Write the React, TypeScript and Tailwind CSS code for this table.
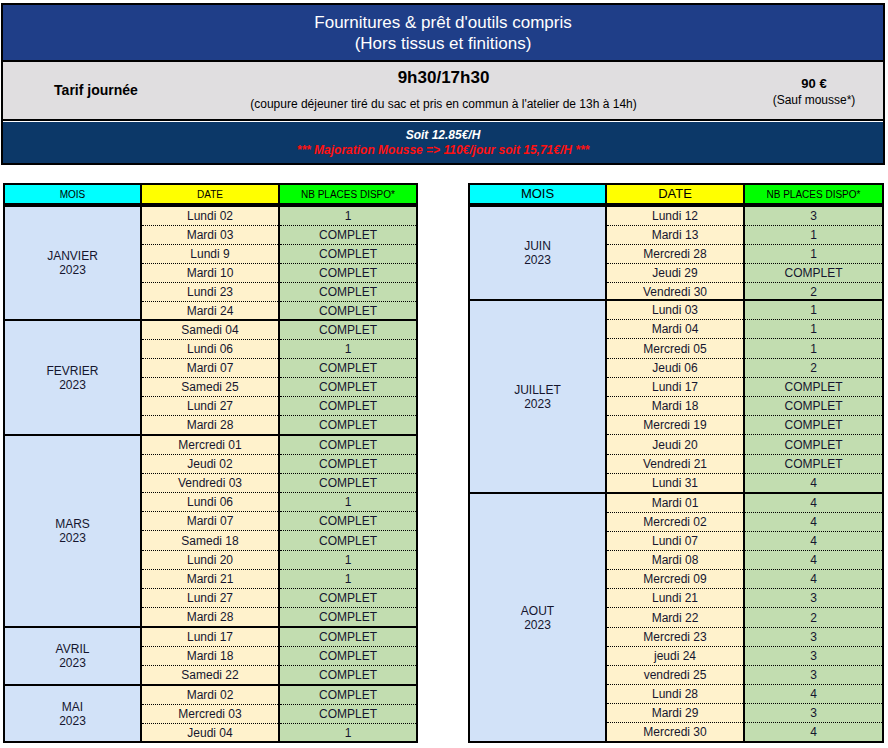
import React from "react";

type Slot = { day: string; places: string };

type MonthGroup = {
  name: string;
  height: string;
  slots: Slot[];
};

type TableData = {
  width: string;
  headSize: string;
  groups: MonthGroup[];
};

const slot = (day: string, places: string): Slot => ({ day, places });

const leftTable: TableData = {
  width: "w-[415px]",
  headSize: "text-[10px]",
  groups: [
    {
      name: "JANVIER",
      height: "h-[114px]",
      slots: [
        slot("Lundi 02", "1"),
        slot("Mardi 03", "COMPLET"),
        slot("Lundi 9", "COMPLET"),
        slot("Mardi 10", "COMPLET"),
        slot("Lundi 23", "COMPLET"),
        slot("Mardi 24", "COMPLET"),
      ],
    },
    {
      name: "FEVRIER",
      height: "h-[115px]",
      slots: [
        slot("Samedi 04", "COMPLET"),
        slot("Lundi 06", "1"),
        slot("Mardi 07", "COMPLET"),
        slot("Samedi 25", "COMPLET"),
        slot("Lundi 27", "COMPLET"),
        slot("Mardi 28", "COMPLET"),
      ],
    },
    {
      name: "MARS",
      height: "h-[192px]",
      slots: [
        slot("Mercredi 01", "COMPLET"),
        slot("Jeudi 02", "COMPLET"),
        slot("Vendredi 03", "COMPLET"),
        slot("Lundi 06", "1"),
        slot("Mardi 07", "COMPLET"),
        slot("Samedi 18", "COMPLET"),
        slot("Lundi 20", "1"),
        slot("Mardi 21", "1"),
        slot("Lundi 27", "COMPLET"),
        slot("Mardi 28", "COMPLET"),
      ],
    },
    {
      name: "AVRIL",
      height: "h-[58px]",
      slots: [
        slot("Lundi 17", "COMPLET"),
        slot("Mardi 18", "COMPLET"),
        slot("Samedi 22", "COMPLET"),
      ],
    },
    {
      name: "MAI",
      height: "h-[57px]",
      slots: [
        slot("Mardi 02", "COMPLET"),
        slot("Mercredi 03", "COMPLET"),
        slot("Jeudi 04", "1"),
      ],
    },
  ],
};

const rightTable: TableData = {
  width: "w-[416px]",
  headSize: "text-[13px]",
  groups: [
    {
      name: "JUIN",
      height: "h-[94px]",
      slots: [
        slot("Lundi 12", "3"),
        slot("Mardi 13", "1"),
        slot("Mercredi 28", "1"),
        slot("Jeudi 29", "COMPLET"),
        slot("Vendredi 30", "2"),
      ],
    },
    {
      name: "JUILLET",
      height: "h-[193px]",
      slots: [
        slot("Lundi 03", "1"),
        slot("Mardi 04", "1"),
        slot("Mercredi 05", "1"),
        slot("Jeudi 06", "2"),
        slot("Lundi 17", "COMPLET"),
        slot("Mardi 18", "COMPLET"),
        slot("Mercredi 19", "COMPLET"),
        slot("Jeudi 20", "COMPLET"),
        slot("Vendredi 21", "COMPLET"),
        slot("Lundi 31", "4"),
      ],
    },
    {
      name: "AOUT",
      height: "h-[249px]",
      slots: [
        slot("Mardi 01", "4"),
        slot("Mercredi 02", "4"),
        slot("Lundi 07", "4"),
        slot("Mardi 08", "4"),
        slot("Mercredi 09", "4"),
        slot("Lundi 21", "3"),
        slot("Mardi 22", "2"),
        slot("Mercredi 23", "3"),
        slot("jeudi 24", "3"),
        slot("vendredi 25", "3"),
        slot("Lundi 28", "4"),
        slot("Mardi 29", "3"),
        slot("Mercredi 30", "4"),
      ],
    },
  ],
};

const cellRow =
  "flex flex-1 items-center justify-center border-b border-dotted border-black last:border-b-0";

const PlanningTable = ({ data }: { data: TableData }) => {
  return (
    <div className={`${data.width} border-2 border-black`}>
      <div className="flex h-[20px] border-b-2 border-black text-black">
        <div
          className={`flex w-[137px] items-center justify-center border-r-2 border-black bg-[#00ffff] ${data.headSize}`}
        >
          MOIS
        </div>
        <div
          className={`flex w-[138px] items-center justify-center border-r-2 border-black bg-[#ffff00] ${data.headSize}`}
        >
          DATE
        </div>
        <div className="flex flex-1 items-center justify-center bg-[#00ff00] text-[10px]">
          NB PLACES DISPO*
        </div>
      </div>

      {data.groups.map((group) => (
        <div
          key={group.name}
          className={`flex border-t-2 border-black first-of-type:border-t-0 ${group.height}`}
        >
          <div className="flex w-[137px] items-center justify-center border-r-2 border-black bg-[#d2e2f8] text-center leading-[14px]">
            {group.name}
            <br />
            2023
          </div>
          <div className="flex w-[138px] flex-col border-r-2 border-black bg-[#fff2cc]">
            {group.slots.map((s, i) => (
              <div key={i} className={cellRow}>
                {s.day}
              </div>
            ))}
          </div>
          <div className="flex flex-1 flex-col bg-[#c2ddb0]">
            {group.slots.map((s, i) => (
              <div key={i} className={cellRow}>
                {s.places}
              </div>
            ))}
          </div>
        </div>
      ))}
    </div>
  );
};

export default function App() {
  return (
    <div className="min-h-screen bg-white font-['Liberation_Sans',Arial,sans-serif] text-[12px] text-[#15152e]">
      <div className="ml-[1px] mt-[3px] w-[884px] border-2 border-black">
        <div className="flex h-[57px] flex-col items-center justify-center border-b-2 border-black bg-[#1f3e88] text-[17px] leading-[21px] text-white">
          <div>Fournitures &amp; prêt d'outils compris</div>
          <div>(Hors tissus et finitions)</div>
        </div>

        <div className="flex h-[59px] border-b-2 border-black bg-[#e0dee0] text-black">
          <div className="flex w-[186px] items-center justify-center text-[14px] font-bold">
            Tarif journée
          </div>
          <div className="flex flex-1 flex-col items-center pr-[47px] pt-[6px]">
            <div className="text-[17px] font-bold leading-[20px]">
              9h30/17h30
            </div>
            <div className="mt-[9px] text-[12px] leading-[14px]">
              (coupure déjeuner tiré du sac et pris en commun à l'atelier de
              13h à 14h)
            </div>
          </div>
          <div className="flex w-[138px] flex-col items-center justify-center pt-[2px]">
            <div className="text-[13px] font-bold leading-[16px]">90 €</div>
            <div className="text-[12px] leading-[16px]">(Sauf mousse*)</div>
          </div>
        </div>

        <div className="flex h-[42px] flex-col items-center justify-center border-t border-white bg-[#0c3868] text-[12px] font-bold italic leading-[15px]">
          <div className="text-white">Soit 12.85€/H</div>
          <div className="text-[#ff1010]">
            *** Majoration Mousse =&gt; 110€/jour soit 15,71€/H ***
          </div>
        </div>
      </div>

      <div className="ml-[3px] mt-[18px] flex gap-[50px]">
        <PlanningTable data={leftTable} />
        <PlanningTable data={rightTable} />
      </div>
    </div>
  );
}
